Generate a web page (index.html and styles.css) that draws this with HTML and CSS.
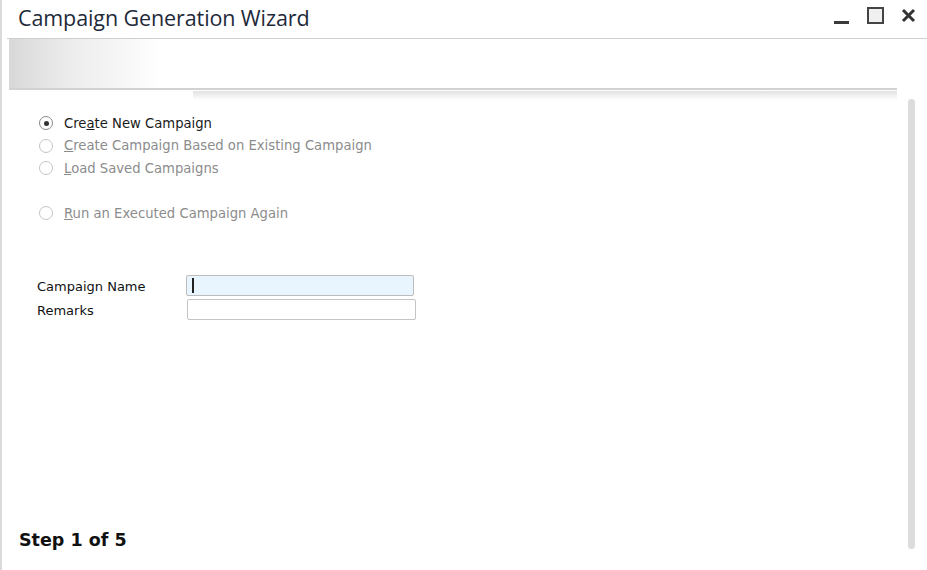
FILE: index.html
```html
<!DOCTYPE html>
<html lang="en">
<head>
  <meta charset="UTF-8" />
  <title>Campaign Generation Wizard</title>
  <link rel="stylesheet" href="styles.css">
</head>
<body>
  <div class="window">
    <div class="titleBar">
      <div class="title">Campaign Generation Wizard</div>
      <div class="winButtons">
        <svg class="btnMin" width="16" height="26" viewBox="0 0 16 26"><rect x="0" y="21" width="15" height="3" fill="#3a3a3a"/></svg>
        <svg class="btnMax" width="18" height="26" viewBox="0 0 18 26"><rect x="1" y="8" width="15" height="15" fill="#f0f0f0" stroke="#444" stroke-width="2"/></svg>
        <svg class="btnClose" width="15" height="26" viewBox="0 0 15 26"><path d="M2 10 L13 21 M13 10 L2 21" stroke="#333" stroke-width="3"/></svg>
      </div>
    </div>
    <div class="page">
      <div class="main">
        <div class="banner"></div>
        <div class="shade"></div>
        <div class="options">
          <label class="option">
            <span class="radio checked"></span>
            <span>Cre<u>a</u>te New Campaign</span>
          </label>
          <label class="option disabled">
            <span class="radio"></span>
            <span><u>C</u>reate Campaign Based on Existing Campaign</span>
          </label>
          <label class="option disabled">
            <span class="radio"></span>
            <span><u>L</u>oad Saved Campaigns</span>
          </label>
          <label class="option disabled spaced">
            <span class="radio"></span>
            <span><u>R</u>un an Executed Campaign Again</span>
          </label>
        </div>
        <div class="form">
          <div class="field">
            <span class="fieldLabel">Campaign Name</span>
            <div class="input focused"><span class="caret"></span></div>
          </div>
          <div class="field">
            <span class="fieldLabel">Remarks</span>
            <div class="input wide"></div>
          </div>
        </div>
        <div class="step">Step 1 of 5</div>
      </div>
      <div class="scrollTrack">
        <div class="scrollThumb"></div>
      </div>
    </div>
  </div>
</body>
</html>
```

FILE: styles.css
```css
* {
  margin: 0;
  padding: 0;
  box-sizing: border-box;
}
body {
  font-family: "DejaVu Sans", sans-serif;
  background: #fff;
  overflow: hidden;
}
.window {
  width: 927px;
  height: 570px;
  border-left: 2px solid #dadada;
  display: flex;
  flex-direction: column;
}
.titleBar {
  height: 39px;
  margin-left: 5px;
  border-bottom: 1px solid #cfcfcf;
  display: flex;
  align-items: flex-start;
  justify-content: space-between;
}
.title {
  font-family: "Open Sans", sans-serif;
  font-size: 21.5px;
  color: #1e2a3a;
  padding: 3px 0 0 11px;
  letter-spacing: -0.1px;
}
.winButtons {
  display: flex;
  padding-right: 11px;
}
.btnMin {
  margin-right: 17px;
}
.btnMax {
  margin-right: 16px;
}
.page {
  flex: 1;
  display: flex;
}
.main {
  flex: 1;
  display: flex;
  flex-direction: column;
  padding-left: 7px;
}
.banner {
  height: 51px;
  margin-right: 8px;
  border-bottom: 2px solid #d2d2d2;
  background: linear-gradient(90deg, #d8d8d8 0px, #ececec 60px, #f6f6f6 110px, #fff 150px);
}
.shade {
  height: 9px;
  margin-left: 184px;
  margin-right: 8px;
  margin-top: 1px;
  background: linear-gradient(180deg, #e2e2e2, #fff);
}
.options {
  display: flex;
  flex-direction: column;
  padding-left: 30px;
  margin-top: 12px;
}
.option {
  display: flex;
  align-items: center;
  height: 22.5px;
  gap: 11px;
  font-size: 13.2px;
  color: #1a1a1a;
}
.option.disabled {
  color: #8c8c8c;
}
.option.spaced {
  margin-top: 22.5px;
}
.radio {
  width: 14px;
  height: 14px;
  border-radius: 50%;
  border: 1px solid #c4c4c4;
  background: #fff;
  display: flex;
  align-items: center;
  justify-content: center;
}
.radio.checked {
  border-color: #8a8a8a;
}
.radio.checked::after {
  content: "";
  width: 5px;
  height: 5px;
  border-radius: 50%;
  background: #333;
}
.form {
  margin-top: 50px;
  padding-left: 28px;
  display: flex;
  flex-direction: column;
  gap: 3px;
}
.field {
  display: flex;
  align-items: center;
}
.fieldLabel {
  width: 149px;
  padding-top: 3px;
  font-size: 13px;
  color: #111;
}
.input {
  width: 228px;
  height: 21px;
  border: 1px solid #c4c4c4;
  border-radius: 2px;
  background: #fff;
  display: flex;
  align-items: center;
  padding-left: 5px;
}
.input.wide {
  width: 229px;
  margin-left: 1px;
}
.input.focused {
  background: #e8f4fe;
  border-color: #bdbdbd;
}
.caret {
  width: 2px;
  height: 15px;
  background: #222;
}
.step {
  margin-top: auto;
  margin-bottom: 20px;
  padding-left: 10px;
  font-weight: bold;
  font-size: 17.5px;
  color: #111;
}
.scrollTrack {
  width: 22px;
  padding: 60px 12px 21px 3px;
  display: flex;
}
.scrollThumb {
  flex: 1;
  width: 10px;
  border-radius: 5px;
  background: #dcdcdc;
}
```
